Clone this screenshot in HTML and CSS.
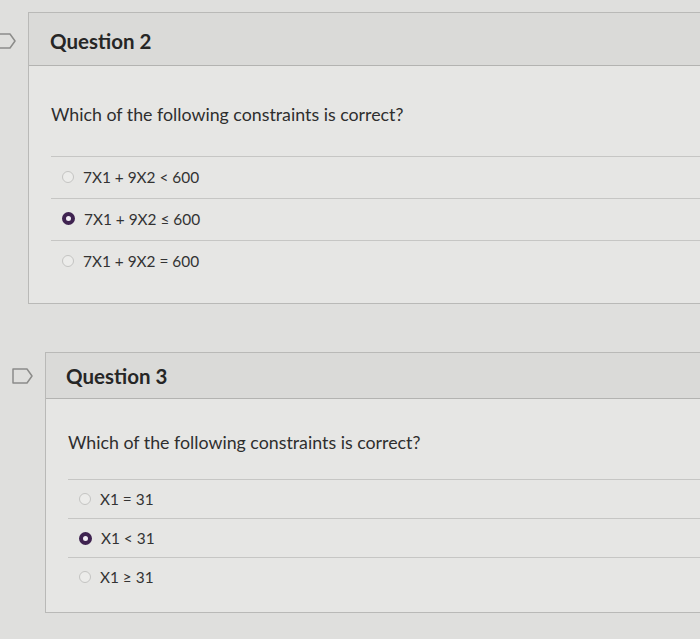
FILE: index.html
```html
<!DOCTYPE html>
<html>
<head>
<meta charset="utf-8">
<link rel="stylesheet" href="styles.css">
</head>
<body>
<div class="page">
  <div class="question q2">
    <svg class="flag" width="22" height="16" viewBox="0 0 22 16"><path d="M1 1 H15 L20 8 L15 15 H1 Z" fill="none" stroke="#8c8c8a" stroke-width="1.5" stroke-linejoin="round"/></svg>
    <div class="card">
      <div class="card-head"><span class="title">Question 2</span></div>
      <div class="card-body">
        <p class="prompt">Which of the following constraints is correct?</p>
        <ul class="answers">
          <li class="answer"><span class="radio"></span><span>7X1 + 9X2 &lt; 600</span></li>
          <li class="answer"><span class="radio checked"></span><span>7X1 + 9X2 ≤ 600</span></li>
          <li class="answer"><span class="radio"></span><span>7X1 + 9X2 = 600</span></li>
        </ul>
      </div>
    </div>
  </div>
  <div class="question q3">
    <svg class="flag" width="22" height="16" viewBox="0 0 22 16"><path d="M1 1 H15 L20 8 L15 15 H1 Z" fill="none" stroke="#8c8c8a" stroke-width="1.5" stroke-linejoin="round"/></svg>
    <div class="card">
      <div class="card-head"><span class="title">Question 3</span></div>
      <div class="card-body">
        <p class="prompt">Which of the following constraints is correct?</p>
        <ul class="answers">
          <li class="answer"><span class="radio"></span><span>X1 = 31</span></li>
          <li class="answer"><span class="radio checked"></span><span>X1 &lt; 31</span></li>
          <li class="answer"><span class="radio"></span><span>X1 ≥ 31</span></li>
        </ul>
      </div>
    </div>
  </div>
</div>
</body>
</html>
```
FILE: styles.css
```css
html, body {
  margin: 0;
  padding: 0;
  background: #dfdfdd;
  overflow: hidden;
  font-family: Lato, "Liberation Sans", sans-serif;
  color: #2e2e2e;
}
.page {
  width: 700px;
  height: 639px;
  overflow: hidden;
  padding-top: 12px;
  box-sizing: border-box;
}
.question {
  display: flex;
  align-items: flex-start;
}
.flag {
  flex: none;
  margin-right: 11px;
}
.q2 {
  margin-left: -5px;
}
.q2 .flag { margin-top: 21px; }
.q3 {
  margin-top: 48px;
  margin-left: 12px;
}
.q3 .flag { margin-top: 16px; }
.card {
  flex: 1;
  margin-right: -40px;
  border: 1px solid #b9b9b7;
  border-right: none;
  background: #e6e6e4;
}
.card-head {
  background: #dadad8;
  border-bottom: 1px solid #b3b3b1;
  display: flex;
  align-items: center;
  padding-left: 21px;
}
.q2 .card-head { height: 53px; padding-top: 4px; box-sizing: border-box; }
.q3 .card-head { height: 46px; padding-top: 0; box-sizing: border-box; }
.q3 .card-head { padding-left: 20px; }
.title {
  font-weight: 700;
  font-size: 20.5px;
  color: #262626;
}
.card-body {
  padding-left: 22px;
}
.prompt {
  margin: 0;
  font-size: 17.8px;
  color: #2e2e2e;
}
.q2 .prompt { padding-top: 37px; height: 50px; box-sizing: border-box; }
.q2 .answers { margin-top: 40px; padding-bottom: 21px; }
.q3 .prompt { padding-top: 32px; height: 45px; box-sizing: border-box; }
.q3 .answers { margin-top: 35px; padding-bottom: 16px; }
.answers {
  list-style: none;
  margin: 0;
  padding: 0;
}
.answer {
  display: flex;
  align-items: center;
  gap: 9px;
  padding-left: 11px;
  border-top: 1px solid #c6c6c4;
  font-size: 15.4px;
  color: #333;
}
.q2 .answer { height: 42px; padding-bottom: 2px; box-sizing: border-box; }
.q3 .answer { height: 38px; }
.radio {
  width: 12px;
  height: 12px;
  border-radius: 50%;
  border: 1px solid #c4c4c2;
  background: #ececea;
  box-sizing: border-box;
  flex: none;
}
.radio.checked {
  border: 4px solid #3f2350;
  background: #f2eef4;
  width: 13px;
  height: 13px;
}
```
